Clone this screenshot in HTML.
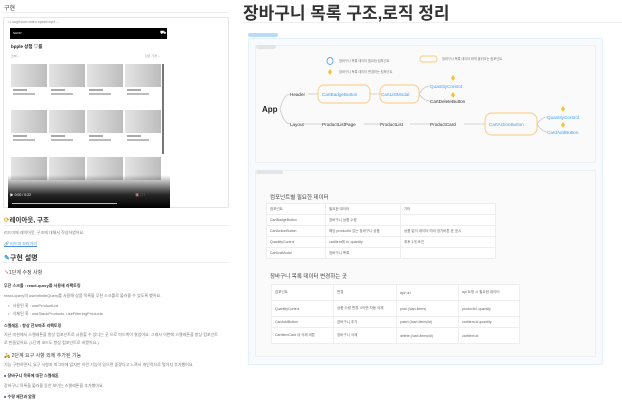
<!DOCTYPE html>
<html><head><meta charset="utf-8"><style>
*{margin:0;padding:0;box-sizing:border-box}
body{width:622px;height:400px;background:#fff;position:relative;overflow:hidden;font-family:"Liberation Sans","Noto Sans CJK KR",sans-serif;color:#37352f}
.a{position:absolute;white-space:nowrap}
.t{font-size:4px;color:#777}
.thumb{position:absolute;width:36px;height:23px;background:linear-gradient(90deg,#e4e4e4,#bdbdbd)}
.cap{position:absolute;width:14px;height:1.5px;background:#aaa}
.cap2{position:absolute;width:22px;height:1.5px;background:#bbb}
td{border:1px solid #eee;font-size:3.5px;color:#666;padding:0 3px;height:11px;white-space:nowrap}
table{border-collapse:collapse;position:absolute;background:#fff}
</style></head><body>
<!-- left -->
<div class="a" style="left:4px;top:3px;font-size:6px;color:#333">구현</div>
<div class="a" style="left:3px;top:12px;width:226px;height:1px;background:#eee"></div>
<div class="a" style="left:3px;top:17px;width:226px;height:191px;border:1px solid #e6e6e6;border-radius:2px"></div>
<div class="a" style="left:8px;top:20px;font-size:3.5px;color:#888">▭ sogif.com-video-speed.mp4 ⌄</div>
<div class="a" style="left:8px;top:28px;width:162px;height:180px;background:#fff"></div>
<div class="a" style="left:10px;top:28px;width:157px;height:11px;background:#000"></div>
<div class="a" style="left:13px;top:31px;font-size:3px;color:#fff">SHOP</div>
<div class="a" style="left:160px;top:30px;font-size:5px;color:#fff">⛟</div>
<div class="a" style="left:11px;top:44px;font-size:4.5px;color:#222;font-weight:bold">bpple 상점 ▽를</div>
<div class="a" style="left:11px;top:54px;font-size:3px;color:#999">전체 ⌄</div>
<div class="a" style="left:145px;top:54px;font-size:3px;color:#999">낮은 가격 ⌄</div>
<div class="a" style="left:162px;top:64px;width:2px;height:90px;background:#777"></div>
<div class="thumb" style="left:11px;top:64px"></div><div class="thumb" style="left:49px;top:64px"></div><div class="thumb" style="left:87px;top:64px"></div><div class="thumb" style="left:125px;top:64px"></div>
<div class="thumb" style="left:11px;top:110px"></div><div class="thumb" style="left:49px;top:110px"></div><div class="thumb" style="left:87px;top:110px"></div><div class="thumb" style="left:125px;top:110px"></div>
<div class="thumb" style="left:11px;top:157px"></div><div class="thumb" style="left:49px;top:157px"></div><div class="thumb" style="left:87px;top:157px"></div><div class="thumb" style="left:125px;top:157px"></div>
<div class="cap" style="left:13px;top:89px"></div><div class="cap2" style="left:13px;top:93px"></div>
<div class="cap" style="left:51px;top:89px"></div><div class="cap2" style="left:51px;top:93px"></div>
<div class="cap" style="left:89px;top:89px"></div><div class="cap2" style="left:89px;top:93px"></div>
<div class="cap" style="left:127px;top:89px"></div><div class="cap2" style="left:127px;top:93px"></div>
<div class="cap" style="left:13px;top:135px"></div><div class="cap2" style="left:13px;top:139px"></div>
<div class="cap" style="left:51px;top:135px"></div><div class="cap2" style="left:51px;top:139px"></div>
<div class="cap" style="left:89px;top:135px"></div><div class="cap2" style="left:89px;top:139px"></div>
<div class="cap" style="left:127px;top:135px"></div><div class="cap2" style="left:127px;top:139px"></div>
<div class="a" style="left:8px;top:175px;width:162px;height:33px;background:linear-gradient(180deg,rgba(0,0,0,0),rgba(0,0,0,.85) 60%,#000)"></div>
<div class="a" style="left:10px;top:193px;font-size:3.5px;color:#fff">▶ 0:00 / 0:22</div>
<div class="a" style="left:135px;top:193px;font-size:3.5px;color:#ccc">🔇 ⛶ ⋮</div>
<div class="a" style="left:12px;top:203px;width:105px;height:1px;background:#bbb"></div>
<div class="a" style="left:4px;top:214px;font-size:6.5px;color:#333;font-weight:bold"><span style="color:#f5a623">⟳</span>레이아웃, 구조</div>
<div class="a" style="left:3px;top:225px;width:226px;height:1px;background:#eee"></div>
<div class="a t" style="left:4px;top:230px">리드미에 레이아웃, 구조에 대해서 작성하였어요.</div>
<div class="a" style="left:4px;top:241px;font-size:4px;color:#4a90d9;text-decoration:underline">🔗 리드미 보러가기</div>
<div class="a" style="left:4px;top:253px;font-size:7px;color:#333;font-weight:bold"><span style="color:#3aa0e0">✎</span>구현 설명</div>
<div class="a" style="left:3px;top:262px;width:226px;height:1px;background:#eee"></div>
<div class="a" style="left:4px;top:269px;font-size:5px;color:#444"><span style="color:#e0336e">↘</span>1단계 수정 사항</div>
<div class="a" style="left:4px;top:283px;font-size:4px;color:#333;font-weight:bold">무한 스크롤 : react-query를 사용해 리팩토링</div>
<div class="a t" style="left:4px;top:293px">react-query의 useInfiniteQuery를 사용해 상품 목록을 무한 스크롤로 불러올 수 있도록 했어요.</div>
<div class="a t" style="left:8px;top:303px">•&nbsp;&nbsp;&nbsp;사용된 훅 : useProductList</div>
<div class="a t" style="left:8px;top:311px">•&nbsp;&nbsp;&nbsp;삭제된 훅 : useStackProducts, useFilteringProducts</div>
<div class="a" style="left:4px;top:323px;font-size:4px;color:#333;font-weight:bold">스켈레톤 : 항상 한꼬마조 리팩토링</div>
<div class="a t" style="left:4px;top:332px">지난 미션에서 스켈레톤을 항상 컴포넌트로 사용할 수 있다는 곳 으로 미드백이 왔었어요. 그래서 이번에 스켈레톤을 항상 컴포넌트</div>
<div class="a t" style="left:4px;top:340px">로 만들었어요. (1단계 코드도 항상 컴포넌트로 바꿨어요.)</div>
<div class="a" style="left:4px;top:352px;font-size:5px;color:#444">🛵 2단계 요구 사항 외에 추가된 기능</div>
<div class="a t" style="left:4px;top:362px">기능 구현하면서, 요구 사항과 피그마에 없지만 이런 기능이 있으면 좋겠다고 느껴서 개인적으로 몇가지 추가했어요.</div>
<div class="a" style="left:4px;top:373px;font-size:4px;color:#333;font-weight:bold"><span style="color:#7b5ea7">■</span> 장바구니 목록에 대한 스켈레톤</div>
<div class="a t" style="left:4px;top:383px">장바구니 목록을 불러올 동안 보이는 스켈레톤을 추가했어요.</div>
<div class="a" style="left:4px;top:394px;font-size:4px;color:#333;font-weight:bold"><span style="color:#7b5ea7">■</span> 수량 제한과 알잘</div>
<!-- right -->
<div class="a" style="left:243px;top:-1px;font-size:17px;font-weight:bold;color:#333">장바구니 목록 구조,로직 정리</div>
<div class="a" style="left:243px;top:22px;width:379px;height:1px;background:#eee"></div>
<div class="a" style="left:248px;top:33px;width:30px;height:4px;border-radius:2px;background:#b9dcfa"></div>
<div class="a" style="left:248px;top:38px;width:355px;height:327px;border:1px solid #e3f0fc;border-radius:2px;background:#f7fbff"></div>
<div class="a" style="left:255px;top:45px;width:341px;height:118px;background:#fafafa;border:1px solid #f0f0f0"></div>
<div class="a" style="left:256px;top:45px;width:20px;height:4px;background:#e4e4e4;border-radius:2px"></div>
<div class="a" style="left:255px;top:170px;width:341px;height:187px;background:#fafafa;border:1px solid #f0f0f0"></div>
<div class="a" style="left:256px;top:170px;width:27px;height:4px;background:#e4e4e4;border-radius:2px"></div>
<svg class="a" style="left:0;top:0" width="622" height="400" viewBox="0 0 622 400" font-family="Liberation Sans, sans-serif">
<g fill="none" stroke="#c8c8c8" stroke-width="0.8">
<path d="M280 109 Q284 94 290 94"/><path d="M280 109 Q284 124 290 124"/>
<path d="M308 94 H318"/><path d="M370 94 H380"/>
<path d="M419 94 Q424 86 430 86"/><path d="M419 94 Q424 101 430 101"/>
<path d="M304 124 H322"/><path d="M364 124 H380"/><path d="M410 124 H430"/><path d="M464 124 H485"/>
<path d="M537 124 Q542 117 547 117"/><path d="M537 124 Q542 132 547 132"/>
</g>
<g fill="none" stroke="#fbc97a" stroke-width="0.9">
<rect x="318" y="85" width="52" height="18" rx="6"/><rect x="380" y="85" width="39" height="18" rx="6"/>
<rect x="485" y="113" width="52" height="22" rx="7"/><rect x="420" y="56" width="17" height="6" rx="2.5"/>
</g>
<ellipse cx="330" cy="61" rx="3" ry="3.5" fill="none" stroke="#5aaaf0" stroke-width="0.9"/>
<g fill="#f6c12f"><path d="M330 69l2 3-2 3-2-3z"/><path d="M453 75l2 3-2 3-2-3z"/><path d="M453 92l2 3-2 3-2-3z"/><path d="M563 106l2 3-2 3-2-3z"/><path d="M563 122l2 3-2 3-2-3z"/></g>
<g font-size="3.2" fill="#777"><text x="339" y="62">장바구니 목록 데이터 필요한 컴포넌트</text><text x="339" y="73">장바구니 목록 데이터 변경하는 컴포넌트</text><text x="442" y="60">장바구니 목록 데이터 바뀌 불러오는 컴포넌트</text></g>
<text x="262" y="112" font-size="8" font-weight="bold" fill="#222">App</text>
<g font-size="4.6" fill="#333"><text x="290" y="96">Header</text><text x="290" y="126">Layout</text><text x="322" y="126">ProductListPage</text><text x="380" y="126">ProductList</text><text x="430" y="126">ProductCard</text><text x="430" y="103">CartDeleteButton</text></g>
<g font-size="4.6" fill="#3fa1f5"><text x="322" y="96">CartBadgeButton</text><text x="381" y="96">CartListModal</text><text x="430" y="88">QuantityControl</text><text x="489" y="126">CartActionButton</text><text x="547" y="119">QuantityControl</text><text x="547" y="134">CardAddButton</text></g>
<text x="270" y="199" font-size="5.5" fill="#444">컴포넌트별 필요한 데이터</text>
<text x="270" y="278" font-size="5.5" fill="#444">장바구니 목록 데이터 변경하는 곳</text>
</svg>
<table style="left:266px;top:203px;width:230px">
<tr><td style="width:59px">컴포넌트</td><td style="width:75px">필요한 데이터</td><td>기타</td></tr>
<tr><td>CartBadgeButton</td><td>장바구니 상품 수량</td><td></td></tr>
<tr><td>CartActionButton</td><td>해당 productId 있는 장바구니 상품</td><td>상품 없이 데이터 따라 장가버튼 표 표시</td></tr>
<tr><td>QuantityControl</td><td>cartItem에 id, quantity</td><td>최후 1개 조건</td></tr>
<tr><td>CartListModal</td><td>장바구니 목록</td><td></td></tr>
</table>
<table style="left:271px;top:284px;width:249px">
<tr><td style="width:62px;height:16px">컴포넌트</td><td style="width:63px">변경</td><td style="width:62px">api/ url</td><td>api 요청 시 필요한 데이터</td></tr>
<tr><td style="height:16px">QuantityControl</td><td>상품 수량 변경, 0이면 자동 삭제</td><td>post (/cart-items)</td><td>productId, quantity</td></tr>
<tr><td>CartAddButton</td><td>장바구니 추가</td><td>patch (/cart-items/id)</td><td>cartItem.id quantity</td></tr>
<tr><td style="height:16px">CartItemCard 내 삭제 버튼</td><td>장바구니 삭제</td><td>delete (/cart-items/id)</td><td>cartItem.id</td></tr>
</table>
</body></html>
